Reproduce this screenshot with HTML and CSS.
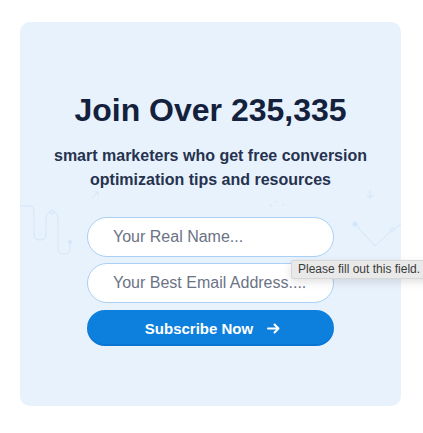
FILE: index.html
```html
<!DOCTYPE html>
<html lang="en">

<head>
    <meta charset="UTF-8">
    <meta name="viewport" content="width=device-width, initial-scale=1.0">
    <title>Join Over 235,335</title>
    <link rel="stylesheet" href="styles.css">
</head>

<body>

    <!-- Caja de suscripcion -->
    <div class="optin-box">
        <svg class="deco" width="381" height="80" viewBox="0 0 381 80" fill="none">
            <path d="M0 16 H10 Q14 16 14 22 V44 Q14 50 20 50 Q26 50 26 44 V28 Q26 22 32 22 Q38 22 38 28 V58 Q38 64 44 64 Q50 64 50 58 V52" stroke="#d3e5f8" stroke-width="1"/>
            <circle cx="32" cy="22" r="2" stroke="#d3e5f8" fill="#e8f2fc"/>
            <circle cx="50" cy="52" r="2" fill="#d3e5f8"/>
            <path d="M250 14 L252 17 M256 13 L256 11 M262 16 L264 14" stroke="#d3e5f8"/>
            <circle cx="335" cy="34" r="2.5" fill="#d3e5f8"/>
            <path d="M335 34 L355 56 L372 40 L381 34" stroke="#d3e5f8"/>
            <circle cx="372" cy="40" r="2" stroke="#d3e5f8" fill="#e8f2fc"/>
            <path d="M350 0 V8 M347 5 L350 8 L353 5" stroke="#d3e5f8"/>
            <path d="M72 8 L78 2 M74 2 H78 V6" stroke="#d3e5f8"/>
        </svg>

        <h2 class="optin-title">Join Over 235,335</h2>
        <p class="optin-sub">smart marketers who get free conversion<br>optimization tips and resources</p>

        <form class="optin-form">
            <input type="text" class="optin-input" placeholder="Your Real Name...">
            <input type="email" class="optin-input" placeholder="Your Best Email Address....">
            <button type="button" class="optin-btn">
                Subscribe Now
                <svg width="13" height="11" viewBox="0 0 13 11" fill="none">
                    <path d="M1 5.5 H11.5 M7.5 1.5 L11.5 5.5 L7.5 9.5" stroke="#fff" stroke-width="2" stroke-linecap="round" stroke-linejoin="round"/>
                </svg>
            </button>
        </form>

        <!-- Aviso de validacion del navegador -->
        <div class="field-tip">Please fill out this field.</div>
    </div>

</body>

</html>
```

FILE: styles.css
```css
/* Reset */
* {
    margin: 0;
    padding: 0;
    box-sizing: border-box;
}

html,
body {
    overflow: hidden;
}

body {
    background-color: #fff;
    font-family: "Liberation Sans", Arial, sans-serif;
}

/* Caja principal */
.optin-box {
    position: relative;
    width: 381px;
    margin: 22px 0 0 20px;
    padding: 69px 0 60px;
    background-color: #e8f2fc;
    border-radius: 10px;
    display: flex;
    flex-direction: column;
    align-items: center;
}

.deco {
    position: absolute;
    top: 168px;
    left: 0;
}

.optin-title {
    position: relative;
    font-size: 32px;
    line-height: 38px;
    font-weight: 700;
    color: #14213d;
}

.optin-sub {
    position: relative;
    margin-top: 15px;
    font-size: 16px;
    line-height: 24px;
    font-weight: 700;
    color: #26324f;
    text-align: center;
}

/* Formulario */
.optin-form {
    position: relative;
    margin-top: 25px;
    width: 247px;
    display: flex;
    flex-direction: column;
    gap: 6px;
}

.optin-input {
    height: 40px;
    padding: 0 25px;
    border: 1px solid #a9d0f5;
    border-radius: 20px;
    background-color: #fff;
    font-family: inherit;
    font-size: 16px;
    color: #333;
    outline: none;
}

.optin-input::placeholder {
    color: #6b7385;
}

.optin-btn {
    height: 36px;
    margin-top: 1px;
    border: none;
    border-radius: 18px;
    background-color: #0d80de;
    box-shadow: inset 0 -2px 0 rgba(0, 60, 140, 0.15);
    color: #fff;
    font-family: inherit;
    font-size: 15px;
    font-weight: 700;
    display: flex;
    align-items: center;
    justify-content: center;
    gap: 14px;
    padding-left: 4px;
    cursor: pointer;
}

/* Tooltip */
.field-tip {
    position: absolute;
    top: 238px;
    left: 271px;
    height: 19px;
    padding: 0 8px 0 6px;
    white-space: nowrap;
    background-color: #e9e9e9;
    border: 1px solid #d6d6d6;
    border-radius: 2px;
    box-shadow: 0 3px 8px rgba(0, 0, 0, 0.12);
    font-size: 12px;
    line-height: 17px;
    color: #3a3a3a;
}
```
